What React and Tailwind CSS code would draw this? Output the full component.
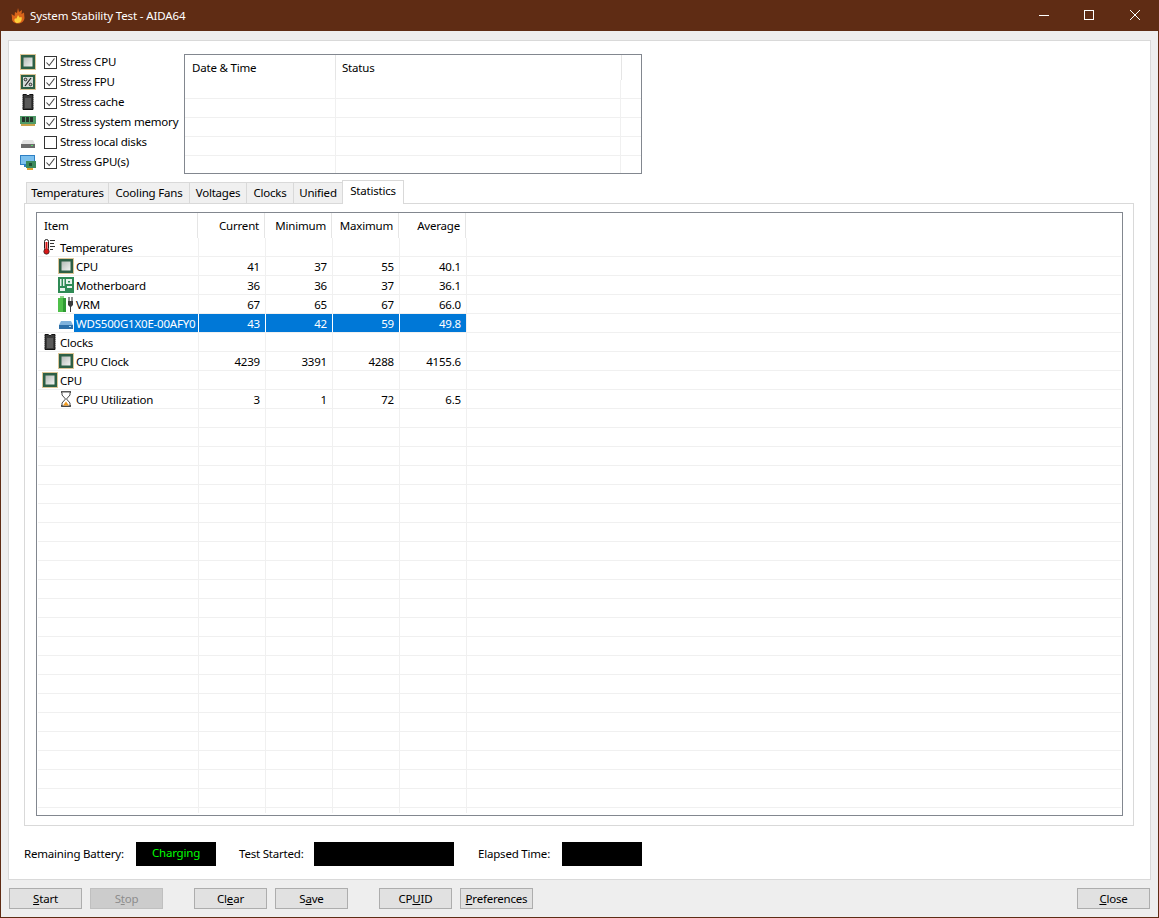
import React from "react";

const Cpu = () => (
  <svg width="16" height="16" viewBox="0 0 16 16" className="shrink-0">
    <defs>
      <linearGradient id="cpuCore" x1="0" y1="0" x2="1" y2="1">
        <stop offset="0" stopColor="#b4bab6" />
        <stop offset="1" stopColor="#f2f3f2" />
      </linearGradient>
    </defs>
    <rect x="0.5" y="0.5" width="15" height="15" fill="none" stroke="#b88a2c" strokeWidth="1" strokeDasharray="1 1" />
    <rect x="1" y="1" width="14" height="14" fill="#2d5f45" />
    <rect x="3.5" y="3.5" width="9" height="9" fill="url(#cpuCore)" />
  </svg>
);

const Fpu = () => (
  <svg width="16" height="16" viewBox="0 0 16 16" className="shrink-0">
    <rect x="0.5" y="0.5" width="15" height="15" fill="none" stroke="#b88a2c" strokeWidth="1" strokeDasharray="1 1" />
    <rect x="1" y="1" width="14" height="14" fill="#2d5f45" />
    <rect x="3" y="3" width="10" height="10" fill="#d5dad7" />
    <path d="M5 12 L11 4" stroke="#222" strokeWidth="1.2" />
    <circle cx="5.5" cy="5.5" r="1.3" fill="none" stroke="#222" strokeWidth="1" />
    <circle cx="10.5" cy="10.5" r="1.3" fill="none" stroke="#222" strokeWidth="1" />
  </svg>
);

const Chip = () => (
  <svg width="16" height="16" viewBox="0 0 16 16" className="shrink-0">
    <path d="M3 0.5 H6 Q8 3 10 0.5 H13 V15.5 H3 Z" fill="#3a3a3a" stroke="#111" strokeWidth="1" />
    <path d="M2 2.5 H3 M2 4.5 H3 M2 6.5 H3 M2 8.5 H3 M2 10.5 H3 M2 12.5 H3 M13 2.5 H14 M13 4.5 H14 M13 6.5 H14 M13 8.5 H14 M13 10.5 H14 M13 12.5 H14" stroke="#b5b5b5" strokeWidth="1" />
    <rect x="5" y="4" width="6" height="10" fill="#5a5a5a" />
  </svg>
);

const Memory = () => (
  <svg width="16" height="16" viewBox="0 0 16 16" className="shrink-0">
    <rect x="0" y="2" width="16" height="8" fill="#4f9a68" />
    <rect x="2" y="3" width="3" height="5" fill="#25352b" />
    <rect x="6" y="3" width="3" height="5" fill="#25352b" />
    <rect x="10" y="3" width="3" height="5" fill="#25352b" />
    <rect x="1" y="10" width="14" height="2" fill="#c9a24a" />
  </svg>
);

const Disk = () => (
  <svg width="16" height="16" viewBox="0 0 16 16" className="shrink-0">
    <path d="M3 6 H13 L15 10 H1 Z" fill="#e2e2e2" />
    <rect x="1" y="10" width="14" height="4" fill="#6b6b6b" />
    <rect x="11" y="11" width="2" height="1" fill="#58e06a" />
  </svg>
);

const Gpu = () => (
  <svg width="16" height="16" viewBox="0 0 16 16" className="shrink-0">
    <rect x="0" y="1" width="15" height="10" fill="#2d7fc4" />
    <rect x="1" y="2" width="13" height="8" fill="#7cc0ee" />
    <rect x="4" y="11" width="5" height="2" fill="#2d7fc4" />
    <rect x="6" y="7" width="10" height="7" fill="#3c8a5c" />
    <rect x="9" y="9" width="3" height="3" fill="#1f4f35" />
    <rect x="7" y="14" width="6" height="2" fill="#e0a030" />
  </svg>
);

const Thermo = () => (
  <svg width="16" height="16" viewBox="0 0 16 16" className="shrink-0">
    <rect x="2.5" y="0.5" width="4" height="11" rx="2" fill="#fff" stroke="#222" />
    <circle cx="4.5" cy="12.5" r="2.7" fill="#d81818" stroke="#222" strokeWidth="0.7" />
    <rect x="3.5" y="3" width="2" height="9" fill="#d81818" />
    <path d="M8 1.5 H13 M8 4.5 H12 M8 7.5 H13 M8 10.5 H11" stroke="#333" strokeWidth="1" />
  </svg>
);

const Board = () => (
  <svg width="16" height="16" viewBox="0 0 16 16" className="shrink-0">
    <rect x="0" y="0" width="16" height="16" fill="#2f8a55" />
    <rect x="2" y="2" width="1.5" height="7" fill="#e8f2ec" />
    <rect x="5" y="2" width="1.5" height="7" fill="#e8f2ec" />
    <rect x="8" y="2" width="6" height="5" fill="#e8f2ec" />
    <rect x="10" y="4" width="2" height="1.5" fill="#2f8a55" />
    <rect x="2" y="11" width="5" height="3" fill="#e8f2ec" />
    <rect x="9" y="9" width="5" height="2" fill="#e8f2ec" />
  </svg>
);

const Vrm = () => (
  <svg width="16" height="16" viewBox="0 0 16 16" className="shrink-0">
    <rect x="2" y="0" width="4" height="2" fill="#8fd08a" />
    <rect x="0" y="2" width="8" height="14" fill="#4fc04a" />
    <rect x="5" y="2" width="3" height="14" fill="#2f9a34" />
    <path d="M11 1 V5 M14 1 V5" stroke="#444" strokeWidth="1.2" />
    <path d="M10 5 H15 V9 L13 11 V16 H12 V11 L10 9 Z" fill="#3c3c3c" />
  </svg>
);

const Ssd = () => (
  <svg width="16" height="16" viewBox="0 0 16 16" className="shrink-0">
    <path d="M3 6 H13 L15 10 H1 Z" fill="#7fb2dc" />
    <rect x="1" y="10" width="14" height="4" fill="#2d6fa8" />
    <rect x="11" y="11" width="2" height="1" fill="#a8e0ff" />
  </svg>
);

const Hourglass = () => (
  <svg width="16" height="16" viewBox="0 0 16 16" className="shrink-0">
    <path d="M3 1 H13 M3 15 H13" stroke="#222" strokeWidth="1.4" />
    <path d="M4 1.5 V4 L7.5 8 L4 12 V15 H12 V12 L8.5 8 L12 4 V1.5" fill="#fff" stroke="#333" strokeWidth="0.9" />
    <path d="M5 14.5 L8 10.5 L11 14.5 Z" fill="#f09a20" />
  </svg>
);

const Flame = () => (
  <svg width="16" height="16" viewBox="0 0 16 16" className="shrink-0">
    <path d="M8 0 L9 4 L12 2 L11.5 6 L14 4.5 L14.5 10 C14 14 11 15.5 8 15.5 C4 15.5 1.5 13 2 10 L1.5 6 L4.5 8 L5 4 L7 5 Z" fill="#d9641a" />
    <path d="M8 7 L9.5 9.5 L11.5 9 C12.5 12 10.5 15 7.5 15 C5 15 3.5 12.5 5 10.5 L6.5 10.5 Z" fill="#fdcf3a" />
  </svg>
);

const Check = ({ checked }) => (
  <span className="w-[13px] h-[13px] border border-[#333] bg-white shrink-0 flex items-center justify-center">
    {checked && (
      <svg width="11" height="11" viewBox="0 0 11 11">
        <path d="M1.5 5.5 L4.2 8.5 L9.5 1.5" fill="none" stroke="#444" strokeWidth="1.1" />
      </svg>
    )}
  </span>
);

const stressItems = [
  { label: "Stress CPU", icon: <Cpu />, on: true },
  { label: "Stress FPU", icon: <Fpu />, on: true },
  { label: "Stress cache", icon: <Chip />, on: true },
  { label: "Stress system memory", icon: <Memory />, on: true },
  { label: "Stress local disks", icon: <Disk />, on: false },
  { label: "Stress GPU(s)", icon: <Gpu />, on: true },
];

const tabs = [
  { name: "Temperatures", w: "w-[83px]" },
  { name: "Cooling Fans", w: "w-[82px]" },
  { name: "Voltages", w: "w-[58px]" },
  { name: "Clocks", w: "w-[48px]" },
  { name: "Unified", w: "w-[50px]" },
];

const rows = [
  { name: "Temperatures", icon: <Thermo />, top: true },
  { name: "CPU", icon: <Cpu />, v: ["41", "37", "55", "40.1"] },
  { name: "Motherboard", icon: <Board />, v: ["36", "36", "37", "36.1"] },
  { name: "VRM", icon: <Vrm />, v: ["67", "65", "67", "66.0"] },
  { name: "WDS500G1X0E-00AFY0", icon: <Ssd />, v: ["43", "42", "59", "49.8"], selected: true },
  { name: "Clocks", icon: <Chip />, top: true },
  { name: "CPU Clock", icon: <Cpu />, v: ["4239", "3391", "4288", "4155.6"] },
  { name: "CPU", icon: <Cpu />, top: true },
  { name: "CPU Utilization", icon: <Hourglass />, v: ["3", "1", "72", "6.5"] },
];

const emptyRows = Array.from({ length: 22 });

const StatRow = ({ row }) => (
  <div className="flex h-[19px] shrink-0 border-b border-[#f0f0f0]">
    <div className={`w-[160px] shrink-0 flex items-center ${row?.top ? "pl-[4px]" : "pl-[20px]"}`}>
      {row?.icon}
      {row && (
        <span className={`h-[18px] leading-[20px] pl-[2px] flex-1 whitespace-nowrap overflow-hidden ${row.selected ? "bg-[#0078d7] text-white" : ""}`}>
          {row.name}
        </span>
      )}
    </div>
    {[0, 1, 2, 3].map((i) => (
      <div key={i} className={`w-[67px] shrink-0 border-l text-right pr-[5px] h-[18px] leading-[20px] overflow-hidden ${row?.selected ? "bg-[#0078d7] text-white border-white" : "border-[#f0f0f0]"}`}>
        {row?.v ? row.v[i] : ""}
      </div>
    ))}
    <div className="flex-1 border-l border-[#f0f0f0]" />
  </div>
);

const Button = ({ children, className = "", disabled }) => (
  <div className={`w-[73px] h-[21px] shrink-0 border flex items-center justify-center ${disabled ? "border-[#bfbfbf] bg-[#cccccc] text-[#8c8c8c]" : "border-[#adadad] bg-[#e1e1e1]"} ${className}`}>
    {children}
  </div>
);

export default function App() {
  return (
    <div className="w-[1159px] h-[918px] flex flex-col overflow-hidden bg-[#5f2c14] text-[11.5px] tracking-[-0.2px] text-black" style={{ fontFamily: '"Noto Sans", sans-serif' }}>
      <div className="h-[31px] shrink-0 flex items-center pl-[10px] text-white">
        <Flame />
        <span className="ml-[4px] tracking-[-0.13px]">System Stability Test - AIDA64</span>
        <div className="ml-auto flex items-center gap-[30px] pr-[17px]">
          <svg width="15" height="15" viewBox="0 0 15 15"><path d="M2 7.5 H12" stroke="#fff" strokeWidth="1" /></svg>
          <svg width="15" height="15" viewBox="0 0 15 15"><rect x="2.5" y="2.5" width="9" height="9" fill="none" stroke="#fff" /></svg>
          <svg width="15" height="15" viewBox="0 0 15 15"><path d="M3 2 L13 12 M13 2 L3 12" stroke="#fff" strokeWidth="1" /></svg>
        </div>
      </div>

      <div className="flex-1 mx-[1px] mb-[1px] bg-[#eeeeee] flex flex-col px-[7px] pt-[9px]">
        <div className="h-[840px] shrink-0 bg-white border border-[#d9d9d9] px-[15px] pt-[13px] flex flex-col">
          <div className="flex h-[120px] shrink-0">
            <div className="w-[160px] shrink-0 -mt-[2px] flex flex-col">
              {stressItems.map((s) => (
                <div key={s.label} className="h-[20px] flex items-center gap-[8px] -ml-[4px] whitespace-nowrap">
                  {s.icon}
                  <Check checked={s.on} />
                  <span className="-ml-[5px]">{s.label}</span>
                </div>
              ))}
            </div>
            <div className="w-[458px] h-[120px] border border-[#82878f] flex flex-col overflow-hidden">
              <div className="flex h-[25px] shrink-0">
                <div className="w-[151px] pl-[7px] pt-[4px] border-r border-[#e5e5e5]">Date &amp; Time</div>
                <div className="w-[286px] pl-[6px] pt-[4px] border-r border-[#e5e5e5]">Status</div>
              </div>
              {[0, 1, 2, 3, 4].map((i) => (
                <div key={i} className="flex h-[19px] shrink-0 border-b border-[#f0f0f0]">
                  <div className="w-[151px] border-r border-[#f0f0f0]" />
                  <div className="w-[285px] border-r border-[#f0f0f0]" />
                </div>
              ))}
            </div>
          </div>

          <div className="flex items-end h-[29px] shrink-0 pl-[2px]">
            {tabs.map((t) => (
              <div key={t.name} className={`${t.w} h-[21px] bg-[#f0f0f0] border border-[#d9d9d9] border-b-0 -mr-[1px] flex items-center justify-center whitespace-nowrap`}>
                {t.name}
              </div>
            ))}
            <div className="w-[62px] h-[24px] bg-white border border-[#d9d9d9] border-b-0 flex items-start justify-center pt-[1px] -mb-[1px] relative z-10">
              Statistics
            </div>
          </div>

          <div className="h-[623px] w-[1110px] shrink-0 border border-[#d9d9d9] pl-[11px] pr-[10px] pt-[8px] pb-[10px]">
            <div className="h-[604px] border border-[#82878f] overflow-hidden flex flex-col">
              <div className="flex h-[25px] shrink-0">
                <div className="w-[161px] pl-[7px] pt-[4px] border-r border-[#e5e5e5] shrink-0">Item</div>
                {["Current", "Minimum", "Maximum", "Average"].map((h) => (
                  <div key={h} className="w-[67px] shrink-0 border-r border-[#e5e5e5] text-right pr-[5px] pt-[4px]">{h}</div>
                ))}
              </div>
              <div className="mx-[1px] h-[575px] overflow-hidden flex flex-col">
                {rows.map((r, i) => <StatRow key={i} row={r} />)}
                {emptyRows.map((_, i) => <StatRow key={i} />)}
              </div>
            </div>
          </div>

          <div className="flex items-center h-[24px] mt-[16px] shrink-0">
            <span className="w-[112px] shrink-0">Remaining Battery:</span>
            <div className="w-[80px] h-[24px] pb-[2px] bg-black text-[#00ff00] flex items-center justify-center">Charging</div>
            <span className="ml-[23px] w-[75px] shrink-0">Test Started:</span>
            <div className="w-[140px] h-[24px] bg-black" />
            <span className="ml-[24px] w-[84px] shrink-0">Elapsed Time:</span>
            <div className="w-[80px] h-[24px] bg-black" />
          </div>
        </div>

        <div className="flex mt-[8px] ml-[1px] items-center">
          <Button><span><u>S</u>tart</span></Button>
          <Button disabled className="ml-[8px]"><span>S<u>t</u>op</span></Button>
          <Button className="ml-[31px]"><span>Cl<u>e</u>ar</span></Button>
          <Button className="ml-[8px]"><span>S<u>a</u>ve</span></Button>
          <Button className="ml-[31px]"><span>CP<u>U</u>ID</span></Button>
          <Button className="ml-[8px]"><span><u>P</u>references</span></Button>
          <Button className="ml-auto mr-[1px]"><span><u>C</u>lose</span></Button>
        </div>
      </div>
    </div>
  );
}
